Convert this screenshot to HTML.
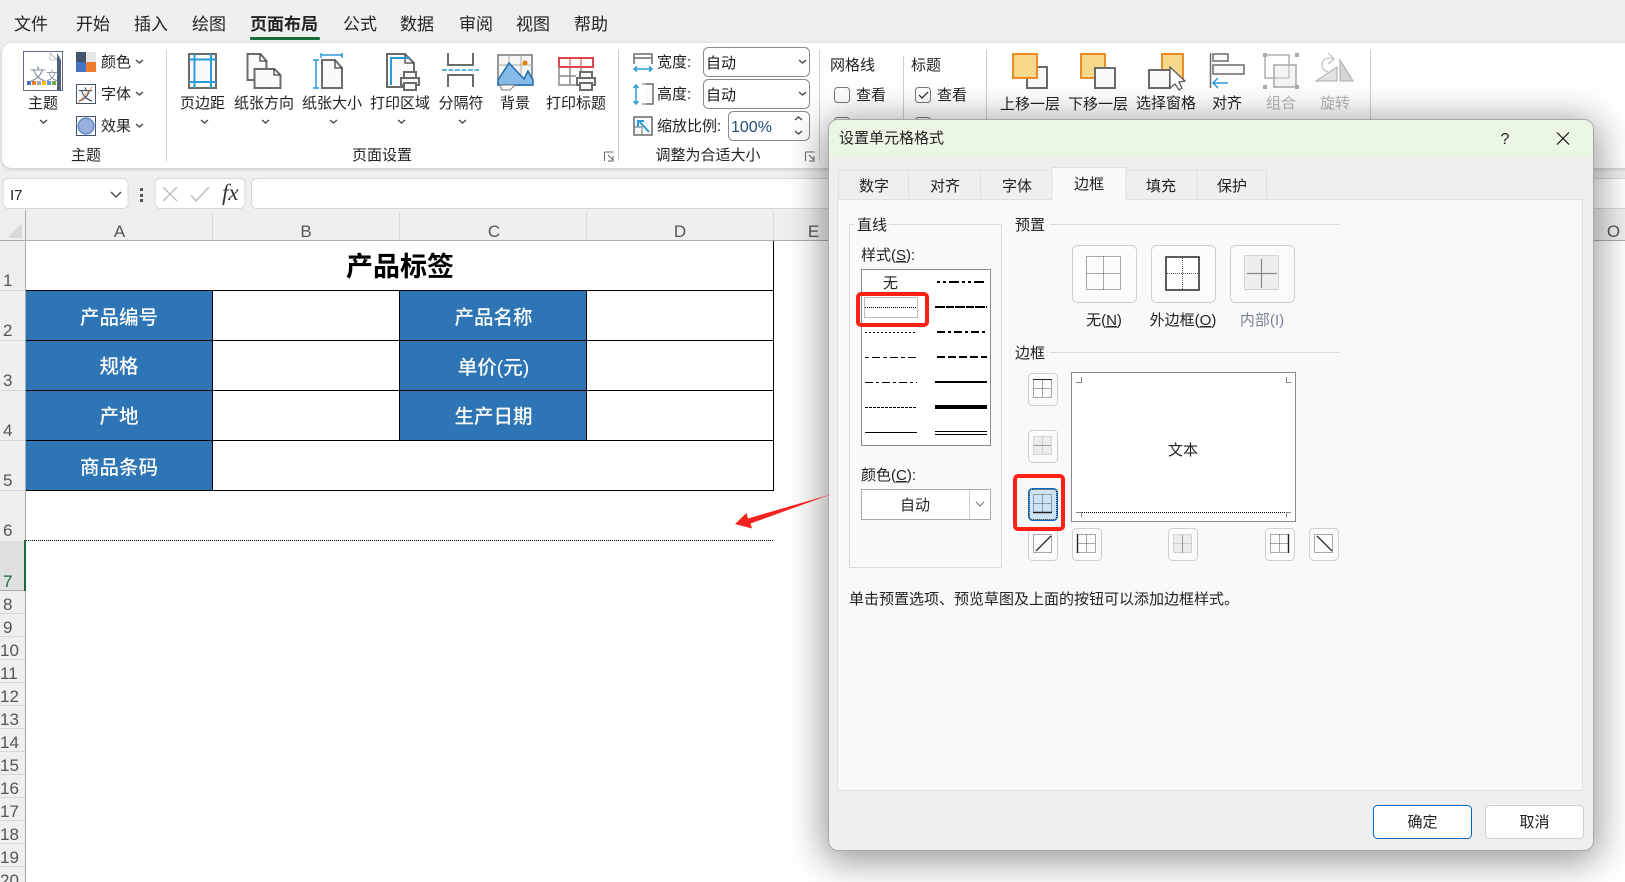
<!DOCTYPE html>
<html lang="zh"><head><meta charset="utf-8"><title>Excel</title>
<style>
html,body{margin:0;padding:0;width:1625px;height:882px;overflow:hidden;background:#efefef}
#ribbon{position:absolute;left:2px;top:43px;width:1640px;height:125px;background:#fff;border-radius:10px;box-shadow:0 1px 4px rgba(0,0,0,.18)}
#sheet{position:absolute;left:26px;top:241px;width:1600px;height:641px;background:#fff}
#dlg{position:absolute;left:828px;top:119px;width:764px;height:730px;background:#efefef;border:1px solid #a8a8a8;border-radius:10px;box-shadow:0 6px 38px 4px rgba(0,0,0,.42);overflow:hidden}
#dlg .t{height:37px;background:#ebf6e4}
svg{position:absolute;left:0;top:0}
text{font-family:"Liberation Sans","Noto Sans CJK SC",sans-serif;fill:#222;font-size:15px}
.m{text-anchor:middle}
.h{font-size:17px;fill:#555;font-weight:300}
.w{font-size:19.5px;fill:#fff;font-weight:500;text-anchor:middle}
.g{fill:#b4b4b4}
.i{fill:#fafafa;stroke:#6b6b6b;stroke-width:2}
.b{fill:none;stroke:#2b9ad8;stroke-width:2}
.o{fill:#f8d98c;stroke:#ed8b2b;stroke-width:2}
.c{fill:none;stroke:#444;stroke-width:1.3}
.btn{fill:#fbfbfb;stroke:#cfcfcf;stroke-width:1}
.d{fill:none;stroke:#555;stroke-width:1;stroke-dasharray:1 1;shape-rendering:crispEdges}
.dg{fill:none;stroke:#b0b0b0;stroke-width:1;stroke-dasharray:1 1;shape-rendering:crispEdges}
.l{fill:none;stroke:#000;shape-rendering:crispEdges}
</style></head><body>
<div id="ribbon"></div>
<div id="sheet"></div>
<svg width="1625" height="882" viewBox="0 0 1625 882">
<defs>
<symbol id="pr" viewBox="0 0 20 20" overflow="visible"><rect x="4" y="1" width="12" height="6" class="i"/><rect x="1" y="7" width="18" height="7" class="i"/><rect x="4" y="12" width="12" height="7" class="i"/></symbol>
</defs>
<!-- menu -->
<g style="font-size:17px">
<text x="14" y="30" style="font-size:17px">文件</text><text x="76" y="30" style="font-size:17px">开始</text><text x="134" y="30" style="font-size:17px">插入</text><text x="192" y="30" style="font-size:17px">绘图</text><text x="250" y="30" style="font-size:17px;font-weight:700">页面布局</text><text x="343" y="30" style="font-size:17px">公式</text><text x="400" y="30" style="font-size:17px">数据</text><text x="459" y="30" style="font-size:17px">审阅</text><text x="516" y="30" style="font-size:17px">视图</text><text x="574" y="30" style="font-size:17px">帮助</text>
</g>
<rect x="250" y="37" width="70" height="3" rx="1" fill="#166d3b"/>
<!-- ribbon separators -->
<g stroke="#cfcfcf"><path d="M166.500 50V161M618.500 50V161M819.500 50V161M903.500 56V120M986.500 50V120M1370.500 50V120"/></g>
<!-- theme -->
<rect x="23.500" y="51.500" width="39" height="39" fill="#fff" stroke="#5f6a80"/><path d="M57 53h4v37h-4zM50 53h7l4 7v-7z" fill="#4f5f7c"/><path d="M50 53v7h7z" fill="#fff" stroke="#999" stroke-width=".6"/>
<text x="30" y="80" style="font-size:16px;fill:#8b95a8">文</text><text x="46" y="80" style="font-size:12px;fill:#8b95a8">文</text>
<rect x="27" y="81" width="4" height="4" fill="#4472c4"/><rect x="32" y="81" width="4" height="4" fill="#ed7d31"/><rect x="37" y="81" width="4" height="4" fill="#a5a5a5"/><rect x="42" y="81" width="4" height="4" fill="#ffc000"/><rect x="47" y="81" width="4" height="4" fill="#5b9bd5"/><rect x="52" y="81" width="4" height="4" fill="#70ad47"/>
<text x="43" y="108" class="m">主题</text><path class="c" d="M40 120l3.500 3 3.500-3"/>
<rect x="76" y="52" width="10" height="10" fill="#44546a"/><rect x="86" y="52" width="10" height="10" fill="#e7e6e6"/><rect x="76" y="62" width="10" height="10" fill="#4472c4"/><rect x="86" y="62" width="10" height="10" fill="#ed7d31"/>
<text x="101" y="67">颜色</text><path class="c" d="M136 60l3.500 3 3.500-3"/>
<rect x="76.500" y="84.500" width="19" height="19" fill="#fff" stroke="#44546a"/><text x="78" y="100" style="font-size:15px;fill:#44546a">文</text><path d="M78 103l14-16" stroke="#ed7d31" fill="none" opacity=".7"/>
<text x="101" y="99">字体</text><path class="c" d="M136 92l3.500 3 3.500-3"/>
<rect x="76.500" y="116.500" width="19" height="19" fill="#fff" stroke="#44546a"/><circle cx="86" cy="126" r="8" fill="#9aaedc" stroke="#4472c4"/>
<text x="101" y="131">效果</text><path class="c" d="M136 124l3.500 3 3.500-3"/>
<text x="86" y="160" class="m">主题</text>
<!-- page setup -->
<rect x="189" y="54" width="27" height="34" class="i"/><path class="b" d="M194.500 54V88M211 54V88M189 59.500H216M189 82H216"/>
<text x="202.500" y="108" class="m">页边距</text><path class="c" d="M201 120l3.500 3 3.500-3"/>
<path class="i" d="M247.500 54h13l6 7v8h-12v11h-7z"/><path class="i" d="M254.500 69h20l6 6v13h-26z"/><path class="c" d="M260 54v7h7M274 69v6h6"/>
<text x="264" y="108" class="m">纸张方向</text><path class="c" d="M262 120l3.500 3 3.500-3"/>
<path class="b" d="M321 55H342" style="stroke-width:1.500"/><path class="b" style="stroke-width:1.500" d="M321 53v5M342 53v5M316 60V88M313 60h6M313 88h6"/><path class="i" d="M322 60h13l7 8v20h-20z"/><path class="c" d="M335 60v8h7"/>
<text x="332" y="108" class="m">纸张大小</text><path class="c" d="M330 120l3.500 3 3.500-3"/>
<path class="i" d="M387 54h18l9 9v24h-27z"/><path class="c" d="M405 54v9h9"/><path class="b" d="M391 85V58H409"/><use href="#pr" x="400" y="71" width="20" height="20"/>
<text x="400" y="108" class="m">打印区域</text><path class="c" d="M398 120l3.500 3 3.500-3"/>
<path class="i" style="fill:none" d="M448 53v12h25V53M448 87V75h25v12"/><path d="M442 70H479" stroke="#2b9ad8" stroke-width="1.500" stroke-dasharray="5 1.500"/>
<text x="461" y="108" class="m">分隔符</text><path class="c" d="M459 120l3.500 3 3.500-3"/>
<rect x="498" y="55" width="34" height="30" fill="#f6f6f6" stroke="#777" stroke-width="1.500"/><path d="M509 55V85M521 55V85M498 65H532" stroke="#aaa"/><path d="M498 80l11-17 15 16 4-8 5 9v5H498z" fill="#86bbe8" stroke="#1f6db0" stroke-width="1.500"/><circle cx="525" cy="63" r="2.500" fill="#e67e00"/><path d="M500 85h15l-5 5h-8z" fill="#fff" stroke="#777"/>
<text x="515" y="108" class="m">背景</text>
<rect x="559" y="58" width="34" height="9" fill="#fff" stroke="#e0454b" stroke-width="2"/><path d="M570 58v9M581 58v9" stroke="#e0454b"/><path d="M559 67v18h17M570 67v18M559 76h17M581 67v4" fill="none" stroke="#8a8a8a" stroke-width="1.500"/><use href="#pr" x="576" y="71" width="20" height="20"/>
<text x="576" y="108" class="m">打印标题</text>
<text x="382" y="160" class="m">页面设置</text>
<path d="M604.500 152h9M604.500 152v9M608 155l5 5M613 156v5h-5" fill="none" stroke="#666"/>
<!-- fit -->
<path d="M634 54h18v4h-18zM634 58v6M652 58v6" fill="none" stroke="#6b6b6b" stroke-width="1.500"/><path class="b" style="stroke-width:1.500" d="M634 69h18M637 66.500l-3 2.500 3 2.500M649 66.500l3 2.500-3 2.500"/>
<text x="657" y="67">宽度:</text>
<rect x="703.500" y="47.500" width="106" height="29" rx="5" fill="#fff" stroke="#8a8a8a"/><text x="706" y="68" style="fill:#1a1a1a">自动</text><path class="c" d="M799 60l3.500 3 3.500-3"/>
<path class="b" style="stroke-width:1.500" d="M636 85v19M633.500 88l2.500-3 2.500 3M633.500 101l2.500 3 2.500-3"/><path d="M646 84h7v20h-7" fill="#fafafa" stroke="#6b6b6b" stroke-width="1.500"/><path d="M642 84h4M642 104h4" stroke="#6b6b6b"/>
<text x="657" y="99">高度:</text>
<rect x="703.500" y="79.500" width="106" height="29" rx="5" fill="#fff" stroke="#8a8a8a"/><text x="706" y="100" style="fill:#1a1a1a">自动</text><path class="c" d="M799 92l3.500 3 3.500-3"/>
<rect x="634" y="117" width="18" height="18" fill="#fafafa" stroke="#6b6b6b" stroke-width="1.500"/><path d="M634 127h8v8" fill="none" stroke="#6b6b6b"/><path class="b" d="M649 132l-10-11M638 127v-6h6"/>
<text x="657" y="131">缩放比例:</text>
<rect x="728.500" y="111.500" width="81" height="29" rx="5" fill="#fff" stroke="#8a8a8a"/><text x="731" y="132" style="fill:#1f4e79;font-size:16px">100%</text><path class="c" d="M795 120l3.500-3 3.500 3M795 131l3.500 3 3.500-3"/>
<text x="708" y="160" class="m">调整为合适大小</text>
<path d="M805.500 152h9M805.500 152v9M809 155l5 5M814 156v5h-5" fill="none" stroke="#666"/>
<text x="830" y="70">网格线</text><rect x="834.500" y="87.500" width="15" height="15" rx="3" fill="#fff" stroke="#777"/><text x="856" y="100">查看</text>
<text x="911" y="70">标题</text><rect x="915.500" y="87.500" width="15" height="15" rx="3" fill="#fff" stroke="#777"/><path d="M919 95l3 3 6-6" fill="none" stroke="#222" stroke-width="1.200"/><text x="937" y="100">查看</text>
<rect x="834.500" y="117.500" width="15" height="15" rx="3" fill="#fff" stroke="#777"/><rect x="915.500" y="117.500" width="15" height="15" rx="3" fill="#fff" stroke="#777"/>
<!-- arrange -->
<rect x="1027" y="67" width="20" height="21" class="i"/><rect x="1013" y="54" width="24" height="24" class="o"/><text x="1030" y="109" class="m">上移一层</text>
<rect x="1081" y="54" width="24" height="24" class="o"/><rect x="1095" y="68" width="20" height="20" class="i"/><text x="1098" y="109" class="m">下移一层</text>
<rect x="1162" y="54" width="21" height="24" class="o"/><rect x="1149" y="70" width="21" height="18" class="i"/><path d="M1170 67v21l5-4 4 6 3-2-3-6 6-1z" fill="#fff" stroke="#555" stroke-width="1.200"/><text x="1166" y="108" class="m">选择窗格</text>
<path d="M1210.500 53V88" stroke="#6b6b6b" stroke-width="1.500"/><rect x="1213" y="54" width="15" height="7" class="i" style="stroke-width:1.500"/><rect x="1213" y="65" width="31" height="9" class="i" style="stroke-width:1.500"/><path class="b" style="stroke-width:1.500" d="M1228 83h-15M1218 78l-5 5 5 5"/><text x="1227" y="108" class="m">对齐</text>
<rect x="1265" y="55" width="24" height="23" fill="none" stroke="#b0b0b0" stroke-width="1.500"/><rect x="1274" y="65" width="22" height="22" fill="rgba(230,230,230,.4)" stroke="#a8a8a8" stroke-width="1.500"/><path fill="#aaa" d="M1263 53h4v4h-4zM1295 53h4v4h-4zM1263 85h4v4h-4zM1295 85h4v4h-4z"/><text x="1281" y="108" class="m g">组合</text>
<path d="M1316 81l21-14v14z" fill="#e2e2e2" stroke="#aaa"/><path d="M1340 81V60l13 21z" fill="#d6d6d6" stroke="#aaa"/><path d="M1334 59c-8-3-13 2-12 7 0 3 3 5 6 6M1328 53l6 6-6 5" fill="none" stroke="#c0c0c0" stroke-width="1.200"/><text x="1335" y="108" class="m g">旋转</text>
<!-- formula bar -->
<rect x="3" y="178.500" width="125" height="30" rx="5" fill="#fff" stroke="#d8d8d8"/><text x="10" y="200" style="font-size:15px">I7</text><path d="M111 192l5 5 5-5" fill="none" stroke="#444" stroke-width="1.300"/>
<path fill="#555" d="M140 188h3v3h-3zM140 194h3v3h-3zM140 199h3v3h-3z"/>
<rect x="155" y="178.500" width="90" height="30" rx="5" fill="#fff" stroke="#d8d8d8"/><path d="M163 187l14 14M177 187l-14 14M191 195l5 6 13-14" fill="none" stroke="#bdbdbd" stroke-width="1.400"/><text x="222" y="200" style="font-family:'Liberation Serif',serif;font-style:italic;font-size:23px;fill:#333">fx</text>
<rect x="251.500" y="178.500" width="1400" height="30" rx="5" fill="#fff" stroke="#d8d8d8"/>
<!-- headers -->
<rect x="0" y="210" width="1625" height="31" fill="#efefef"/><rect x="0" y="241" width="25" height="641" fill="#efefef"/>
<path d="M7 238L22 223V238z" fill="#d9d9d9"/>
<path d="M25.500 210V882" stroke="#ababab" stroke-width="1"/><path d="M0 240.500H1625" stroke="#ababab"/>
<path d="M212.500 212V240M399.500 212V240M586.500 212V240M773.500 212V240" stroke="#d8d8d8"/>
<text x="119.500" y="237" class="h m">A</text><text x="306" y="237" class="h m">B</text><text x="494" y="237" class="h m">C</text><text x="680" y="237" class="h m">D</text><text x="813.500" y="237" class="h m">E</text><text x="1613.500" y="237" class="h m">O</text>
<path d="M0 290.500H25M0 340.500H25M0 390.500H25M0 440.500H25M0 490.500H25M0 613.500H25M0 636.500H25M0 659.500H25M0 682.500H25M0 705.500H25M0 728.500H25M0 751.500H25M0 774.500H25M0 797.500H25M0 820.500H25M0 843.500H25M0 866.500H25" stroke="#d8d8d8"/>
<rect x="0" y="541" width="24" height="50" fill="#e0e0e0"/><path d="M0 590.500H25" stroke="#ababab"/><rect x="24" y="540" width="2" height="51" fill="#166d3b"/>
<g class="h">
<text x="3" y="286" class="h">1</text><text x="3" y="336" class="h">2</text><text x="3" y="386" class="h">3</text><text x="3" y="436" class="h">4</text><text x="3" y="486" class="h">5</text><text x="3" y="536" class="h">6</text><text x="3" y="587" class="h" style="fill:#166d3b">7</text><text x="3" y="610" class="h">8</text><text x="3" y="633" class="h">9</text>
<text x="0" y="656" class="h">10</text><text x="0" y="679" class="h">11</text><text x="0" y="702" class="h">12</text><text x="0" y="725" class="h">13</text><text x="0" y="748" class="h">14</text><text x="0" y="771" class="h">15</text><text x="0" y="794" class="h">16</text><text x="0" y="817" class="h">17</text><text x="0" y="840" class="h">18</text><text x="0" y="863" class="h">19</text><text x="0" y="886" class="h">20</text>
</g>
<!-- table -->
<rect x="26" y="290" width="187" height="200" fill="#2e75b6"/><rect x="399" y="290" width="187" height="150" fill="#2e75b6"/>
<path d="M26 290.500H773.500M26 340.500H773.500M26 390.500H773.500M26 440.500H773.500M26 490.500H773.500M212.500 290V490M399.500 290V440M586.500 290V440M773.500 241V491" stroke="#000" fill="none"/>
<text x="400" y="276" class="m" style="font-size:27px;font-weight:700;fill:#000">产品标签</text>
<text x="119" y="324" class="w">产品编号</text><text x="119" y="373" class="w">规格</text><text x="119" y="423" class="w">产地</text><text x="119" y="474" class="w">商品条码</text>
<text x="493.500" y="324" class="w">产品名称</text><text x="493.500" y="374" class="w">单价(元)</text><text x="493.500" y="423" class="w">生产日期</text>
<path d="M26 540.500H773" stroke="#000" stroke-dasharray="1 1" shape-rendering="crispEdges"/>
</svg>
<div id="dlg"><div class="t"></div></div>
<svg width="1625" height="882" viewBox="0 0 1625 882">
<text x="839" y="143">设置单元格格式</text><text x="1505" y="144" class="m" style="font-size:16px">?</text><path d="M1557 132.500l12 12M1569 132.500l-12 12" stroke="#111" stroke-width="1.200"/>
<!-- tabs -->
<path d="M838.500 200V170H908.500V200M908.500 170H980.500V200M980.500 170H1052V200M1126 200V170H1197V200M1197 170H1266.500V200" fill="#efefef" stroke="#e0e0e0"/>
<rect x="837.500" y="199.500" width="745" height="591" fill="#f9f9f9" stroke="#e0e0e0"/>
<path d="M1052 200V167.500H1126V200" fill="#f9f9f9" stroke="#e0e0e0"/><rect x="1052.500" y="196" width="73" height="5" fill="#f9f9f9"/>
<text x="874" y="191" class="m">数字</text><text x="945" y="191" class="m">对齐</text><text x="1017" y="191" class="m">字体</text><text x="1089" y="189" class="m">边框</text><text x="1161" y="191" class="m">填充</text><text x="1232" y="191" class="m">保护</text>
<!-- line group -->
<rect x="849.500" y="224.500" width="152" height="343" fill="none" stroke="#dcdcdc"/><rect x="855" y="218" width="34" height="12" fill="#f9f9f9"/>
<text x="857" y="230">直线</text><text x="861" y="260">样式(<tspan text-decoration="underline">S</tspan>):</text>
<rect x="861.500" y="269.500" width="129" height="176" fill="#fff" stroke="#8a8a96"/>
<text x="890.500" y="288" class="m">无</text>
<g>
<path class="l" d="M865 307.500H917" stroke-dasharray="1 1"/><path class="l" d="M865 332.500H917" stroke-dasharray="2 2"/><path class="l" d="M865 357.500H917" stroke-dasharray="4 3 8 3"/><path class="l" d="M865 382.500H917" stroke-dasharray="8 3 3 3"/><path class="l" d="M865 407.500H917" stroke-dasharray="3 1"/><path class="l" d="M865 432.500H917"/>
<path class="l" d="M937 282H987" stroke-width="2" stroke-dasharray="3 3 3 3 10 3"/><path class="l" d="M935 307H987" stroke-width="2" stroke-dasharray="10 1 8 1"/><path class="l" d="M937 332H987" stroke-width="2" stroke-dasharray="8 3 3 3"/><path class="l" d="M937 357H987" stroke-width="2" stroke-dasharray="8 3"/><path class="l" d="M935 382H987" stroke-width="2"/><path class="l" d="M935 407H987" stroke-width="4"/><path class="l" d="M935 431.500H987M935 434.500H987"/>
</g>
<rect x="864.500" y="297.500" width="53" height="20" class="dg" style="stroke:#777"/>
<rect x="858" y="294" width="69" height="31" rx="3" fill="none" stroke="#ff2016" stroke-width="4"/>
<text x="861" y="480">颜色(<tspan text-decoration="underline">C</tspan>):</text>
<rect x="861.500" y="489.500" width="129" height="30" fill="#fff" stroke="#aaa"/><path d="M969.500 490V519" stroke="#ccc"/><path d="M976 502l4 4 4-4" fill="none" stroke="#777"/><text x="915" y="510" class="m">自动</text>
<!-- presets -->
<text x="1015" y="230">预置</text><path d="M1050 224.500H1340M1050 352.500H1340" stroke="#dcdcdc"/>
<rect x="1072.500" y="245.500" width="64" height="57" rx="5" class="btn"/><rect x="1151.500" y="245.500" width="64" height="57" rx="5" class="btn"/><rect x="1230.500" y="245.500" width="64" height="57" rx="5" class="btn"/>
<path class="d" d="M1086.500 256.500h34v33h-34zM1103.500 256.500v33M1086.500 273.500h34"/>
<rect x="1166" y="257" width="33" height="33" fill="#fff" stroke="#333" stroke-width="1.600"/><path class="d" d="M1182.500 258v31M1167 273.500h31"/>
<rect x="1245" y="256" width="33" height="34" fill="#eee"/><path class="dg" d="M1244.500 255.500h34v34h-34z"/><path d="M1261.500 259v29M1247 273.500h30" stroke="#888" stroke-width="1.200"/>
<text x="1104" y="325" class="m">无(<tspan text-decoration="underline">N</tspan>)</text><text x="1183" y="325" class="m">外边框(<tspan text-decoration="underline">O</tspan>)</text><text x="1262" y="325" class="m" style="fill:#7a8494">内部(I)</text>
<text x="1015" y="358">边框</text>
<!-- preview -->
<rect x="1071.500" y="372.500" width="224" height="149" fill="#fff" stroke="#8a8a96"/>
<path d="M1076 382.500h5.500V377M1286.500 377v5.500h5M1076 512.500h5.500v5M1291 512.500h-4.500v5" fill="none" stroke="#888"/>
<path d="M1082 512.500H1286" stroke="#000" stroke-dasharray="1 1" shape-rendering="crispEdges"/>
<text x="1183" y="455" class="m">文本</text>
<!-- side buttons -->
<rect x="1028.500" y="373.500" width="29" height="32" rx="4" class="btn"/><rect x="1028.500" y="430.500" width="29" height="32" rx="4" class="btn"/><rect x="1028.500" y="488.500" width="29" height="32" rx="4" fill="#cce4f7" stroke="#0067c0"/><rect x="1028.500" y="528.500" width="29" height="32" rx="4" class="btn"/>
<rect x="1072.500" y="528.500" width="29" height="32" rx="4" class="btn"/><rect x="1168.500" y="528.500" width="29" height="32" rx="4" class="btn"/><rect x="1265.500" y="528.500" width="29" height="32" rx="4" class="btn"/><rect x="1309.500" y="528.500" width="29" height="32" rx="4" class="btn"/>
<path class="d" d="M1033.500 379.500h18v18h-18zM1042.500 379.500v18M1033.500 388.500h18"/><path d="M1033 379.500h19" stroke="#222"/>
<rect x="1034" y="437" width="17" height="17" fill="#ececec"/><path class="dg" d="M1033.500 436.500h18v18h-18zM1042.500 436.500v18"/><path d="M1034 445.500h17" stroke="#999"/>
<path class="d" d="M1033.500 494.500h18v18h-18zM1042.500 494.500v18M1033.500 503.500h18"/><path d="M1033 512.500h19" stroke="#222" stroke-width="1.400"/><rect x="1029.500" y="489.500" width="27" height="30" rx="3" fill="none" stroke="#111" stroke-dasharray="1 1"/>
<path class="d" d="M1033.500 534.500h18v18h-18z"/><path d="M1036 551l15-15" stroke="#111" stroke-width="1.200"/>
<path class="d" d="M1077.500 534.500h18v18h-18zM1086.500 534.500v18M1077.500 543.500h18"/><path d="M1077.500 534v19" stroke="#222" stroke-width="1.400"/>
<rect x="1174" y="535" width="18" height="18" fill="#ececec"/><path class="dg" d="M1173.500 534.500h18v18h-18zM1173.500 543.500h18"/><path d="M1182.500 535v18" stroke="#999"/>
<path class="d" d="M1270.500 534.500h18v18h-18zM1279.500 534.500v18M1270.500 543.500h18"/><path d="M1288.500 534v19" stroke="#222" stroke-width="1.400"/>
<path class="d" d="M1314.500 534.500h18v18h-18z"/><path d="M1317 536l15 15" stroke="#111" stroke-width="1.200"/>
<rect x="1015" y="476" width="48" height="53" rx="3" fill="none" stroke="#ff2016" stroke-width="4"/>
<text x="849" y="604">单击预置选项、预览草图及上面的按钮可以添加边框样式。</text>
<rect x="1373.500" y="805.500" width="98" height="33" rx="4" fill="#fdfdfd" stroke="#0067c0"/><text x="1422.500" y="827" class="m">确定</text>
<rect x="1485.500" y="805.500" width="98" height="33" rx="4" fill="#fdfdfd" stroke="#cfcfcf"/><text x="1534.500" y="827" class="m">取消</text>
<!-- red arrow -->
<path d="M832 494L748 518.500 746.500 513 735 524 752 528.500 750.500 523.500z" fill="#f5211c"/>
</svg>
</body></html>
